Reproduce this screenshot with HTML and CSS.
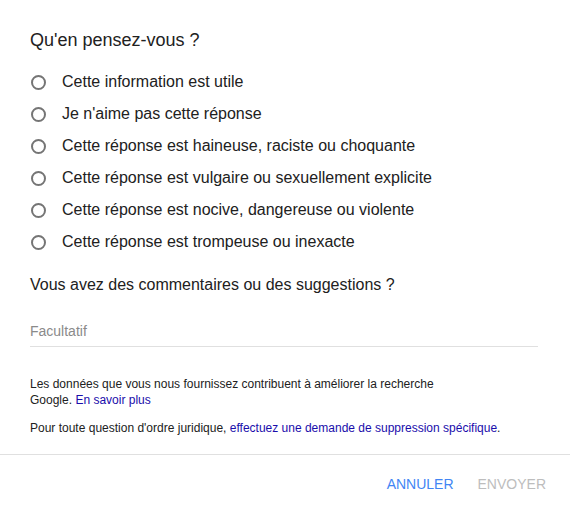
FILE: index.html
```html
<!DOCTYPE html>
<html lang="fr">
<head>
    <meta charset="UTF-8">
    <link rel="stylesheet" href="styles.css">
    <title>Commentaires</title>
</head>
<body>
<div class="dialogue">
    <div class="contenu">
        <h3 class="titre">Qu'en pensez-vous ?</h3>
        <ul class="choix">
            <li><span class="radio"></span>Cette information est utile</li>
            <li><span class="radio"></span>Je n'aime pas cette réponse</li>
            <li><span class="radio"></span>Cette réponse est haineuse, raciste ou choquante</li>
            <li><span class="radio"></span>Cette réponse est vulgaire ou sexuellement explicite</li>
            <li><span class="radio"></span>Cette réponse est nocive, dangereuse ou violente</li>
            <li><span class="radio"></span>Cette réponse est trompeuse ou inexacte</li>
        </ul>
        <div class="question">Vous avez des commentaires ou des suggestions ?</div>
        <div class="champ">Facultatif</div>
        <p class="note">Les données que vous nous fournissez contribuent à améliorer la recherche<br>Google. <a href="#">En savoir plus</a></p>
        <p class="note">Pour toute question d'ordre juridique, <a href="#">effectuez une demande de suppression spécifique</a>.</p>
    </div>
    <div class="actions">
        <span class="bouton annuler">ANNULER</span>
        <span class="bouton envoyer">ENVOYER</span>
    </div>
</div>
</body>
</html>
```

FILE: styles.css
```css
body {
    margin: 0;
    background: #fff;
    font-family: Arial, "Liberation Sans", sans-serif;
    color: #212121;
}

.dialogue {
    width: 570px;
}

.contenu {
    padding: 28px 32px 0 30px;
}

.titre {
    margin: 0;
    font-size: 18px;
    font-weight: normal;
    line-height: 24px;
}

.choix {
    list-style: none;
    margin: 14px 0 0 0;
    padding: 0;
}

.choix li {
    display: flex;
    align-items: center;
    height: 32px;
    font-size: 16px;
}

.radio {
    width: 11px;
    height: 11px;
    border: 2px solid #757575;
    border-radius: 50%;
    margin: 0 16px 0 1px;
}

.question {
    margin-top: 15px;
    font-size: 16px;
    line-height: 24px;
}

.champ {
    margin-top: 26px;
    padding-bottom: 7px;
    font-size: 14px;
    line-height: 16px;
    color: #8a8a8a;
    border-bottom: 1px solid #e0e0e0;
}

.note {
    margin: 29px 0 0 0;
    font-size: 12px;
    line-height: 16px;
}

.note + .note {
    margin-top: 12px;
}

a {
    color: #1a0dab;
    text-decoration: none;
}

.actions {
    margin-top: 18px;
    border-top: 1px solid #e0e0e0;
    display: flex;
    justify-content: flex-end;
    gap: 24px;
    padding: 21px 24px 0 0;
}

.bouton {
    font-size: 14px;
    line-height: 16px;
}

.annuler {
    color: #4285f4;
}

.envoyer {
    color: #bdbdbd;
}
```
